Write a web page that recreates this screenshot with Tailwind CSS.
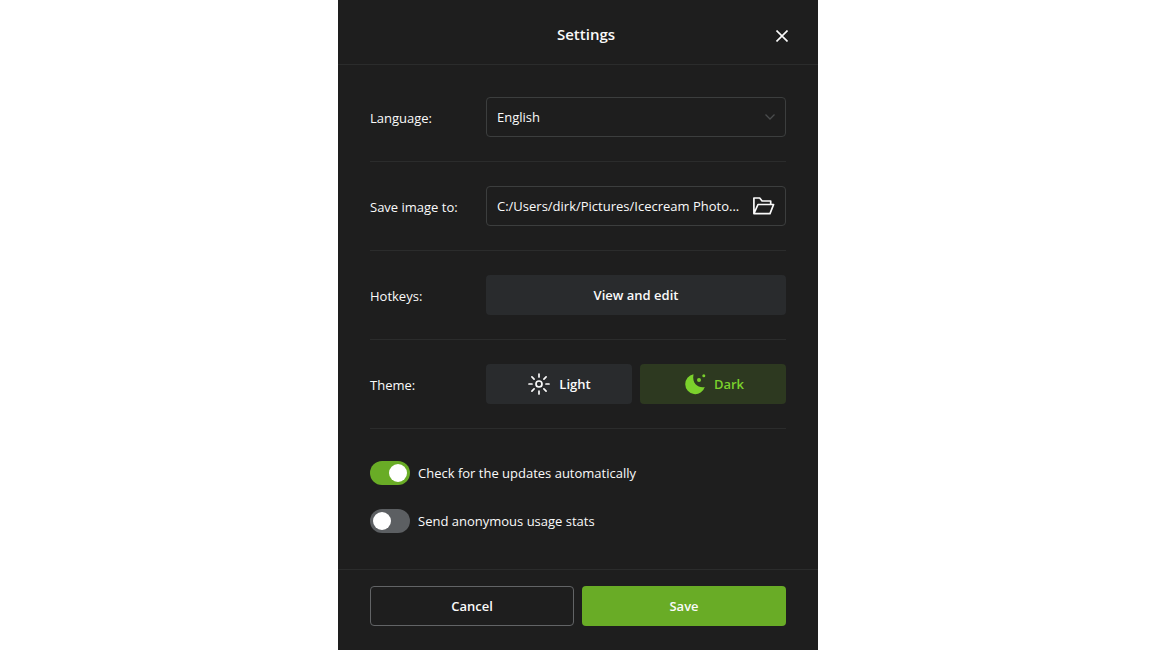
<!DOCTYPE html>
<html lang="en">
<head>
    <meta charset="UTF-8">
    <meta name="viewport" content="width=device-width, initial-scale=1.0">
    <title>Settings</title>
    <script src="https://cdn.jsdelivr.net/npm/@tailwindcss/browser@4"></script>
</head>
<body class="bg-white font-['Open_Sans',sans-serif] text-[13px] leading-5 text-[#fafafa]">
    <form class="flex flex-col w-full max-w-[480px] min-h-screen mx-auto bg-[#1e1e1e]">
        <!-- Header -->
        <header class="grid grid-cols-[1fr_auto_1fr] items-center h-[65px] pl-11 pr-7 pt-1 border-b border-[#2b2c2c]">
            <h1 class="col-start-2 text-[15px] font-semibold">Settings</h1>
            <button type="button" aria-label="Close" class="justify-self-end mt-1 p-0.5 cursor-pointer">
                <svg class="w-3 h-3" viewBox="0 0 12 12" fill="none" stroke="#fafafa" stroke-width="1.6">
                    <path d="M.5.5l11 11M11.5.5l-11 11"/>
                </svg>
            </button>
        </header>

        <!-- Options -->
        <div class="px-8 pt-2 divide-y divide-[#2b2c2c]">
            <div class="flex items-center py-6">
                <label for="language" class="w-[116px] shrink-0 pt-0.5">Language:</label>
                <div class="relative flex-1">
                    <select id="language" class="block w-full h-10 px-2.5 rounded-sm border border-[#3c3e3e] bg-[#1e1e1e] appearance-none">
                        <option>English</option>
                    </select>
                    <svg class="absolute right-2.5 top-4 w-3 h-2 pointer-events-none" viewBox="0 0 12 8" fill="none" stroke="#4a4c4d" stroke-width="1.3">
                        <path d="M1.500 1.500L6 6l4.500-4.500"/>
                    </svg>
                </div>
            </div>

            <div class="flex items-center py-6">
                <label for="folder" class="w-[116px] shrink-0 pt-0.5">Save image to:</label>
                <div class="flex flex-1 items-center h-10 px-2.5 rounded-sm border border-[#3c3e3e]">
                    <input id="folder" type="text" value="C:/Users/dirk/Pictures/Icecream Photo..." class="flex-1 min-w-0 outline-none">
                    <button type="button" aria-label="Browse" class="ml-2 cursor-pointer">
                        <svg class="block w-[22px] h-[18px]" viewBox="0 0 22 18" fill="none" stroke="#fafafa" stroke-width="1.7" stroke-linejoin="round">
                            <path d="M.9 16.600V1h5.800l2.400 3h8.600v3.500M.9 16.600L5 7.500H20.600l-3.600 9.100z"/>
                        </svg>
                    </button>
                </div>
            </div>

            <div class="flex items-center py-6">
                <span class="w-[116px] shrink-0 pt-0.5">Hotkeys:</span>
                <button type="button" class="flex-1 h-10 rounded-sm bg-[#292b2d] font-semibold cursor-pointer">View and edit</button>
            </div>

            <div class="flex items-center py-6">
                <span class="w-[116px] shrink-0 pt-0.5">Theme:</span>
                <div class="grid flex-1 grid-cols-2 gap-2">
                    <button type="button" class="flex items-center justify-center gap-2 h-10 rounded-sm bg-[#292b2d] font-semibold cursor-pointer">
                        <svg class="w-6 h-6" viewBox="0 0 24 24" fill="none" stroke="#fafafa" stroke-width="1.7" stroke-linecap="round">
                            <circle cx="12" cy="12" r="3"/>
                            <path d="M12 2v3M12 19v3M2 12h3M19 12h3M4.900 4.900l2.200 2.200M16.900 16.900l2.200 2.200M4.900 19.100l2.200-2.200M16.900 7.100l2.200-2.200"/>
                        </svg>
                        Light
                    </button>
                    <button type="button" class="flex items-center justify-center gap-2 h-10 rounded-sm bg-[#2d3920] font-semibold text-[#7bd12c] cursor-pointer">
                        <svg class="w-6 h-6" viewBox="0 0 24 24" fill="#7bd12c">
                            <path d="M11.500 2.300A10 10 0 1 0 22.800 15C18 16.500 9.500 13 11.500 2.300z"/>
                            <circle cx="17" cy="7.900" r="2"/>
                            <circle cx="21.800" cy="3.800" r="1.500"/>
                        </svg>
                        Dark
                    </button>
                </div>
            </div>

            <!-- Toggles -->
            <div class="flex flex-col gap-6 py-8">
                <label class="flex items-center gap-2 cursor-pointer">
                    <input type="checkbox" checked class="appearance-none flex items-center w-10 h-6 px-[3px] rounded-full bg-[#5c5f62] checked:bg-[#69ac26] checked:justify-end before:w-[18px] before:h-[18px] before:rounded-full before:bg-white">
                    Check for the updates automatically
                </label>
                <label class="flex items-center gap-2 cursor-pointer">
                    <input type="checkbox" class="appearance-none flex items-center w-10 h-6 px-[3px] rounded-full bg-[#5c5f62] checked:bg-[#69ac26] checked:justify-end before:w-[18px] before:h-[18px] before:rounded-full before:bg-white">
                    Send anonymous usage stats
                </label>
            </div>
        </div>

        <!-- Footer -->
        <footer class="grid grid-cols-2 gap-2 mt-auto px-8 pt-4 pb-6 border-t border-[#2b2c2c]">
            <button type="button" class="h-10 rounded-sm border border-[#626466] font-semibold cursor-pointer">Cancel</button>
            <button type="submit" class="h-10 rounded-sm bg-[#69ac26] font-semibold cursor-pointer">Save</button>
        </footer>
    </form>
</body>
</html>
